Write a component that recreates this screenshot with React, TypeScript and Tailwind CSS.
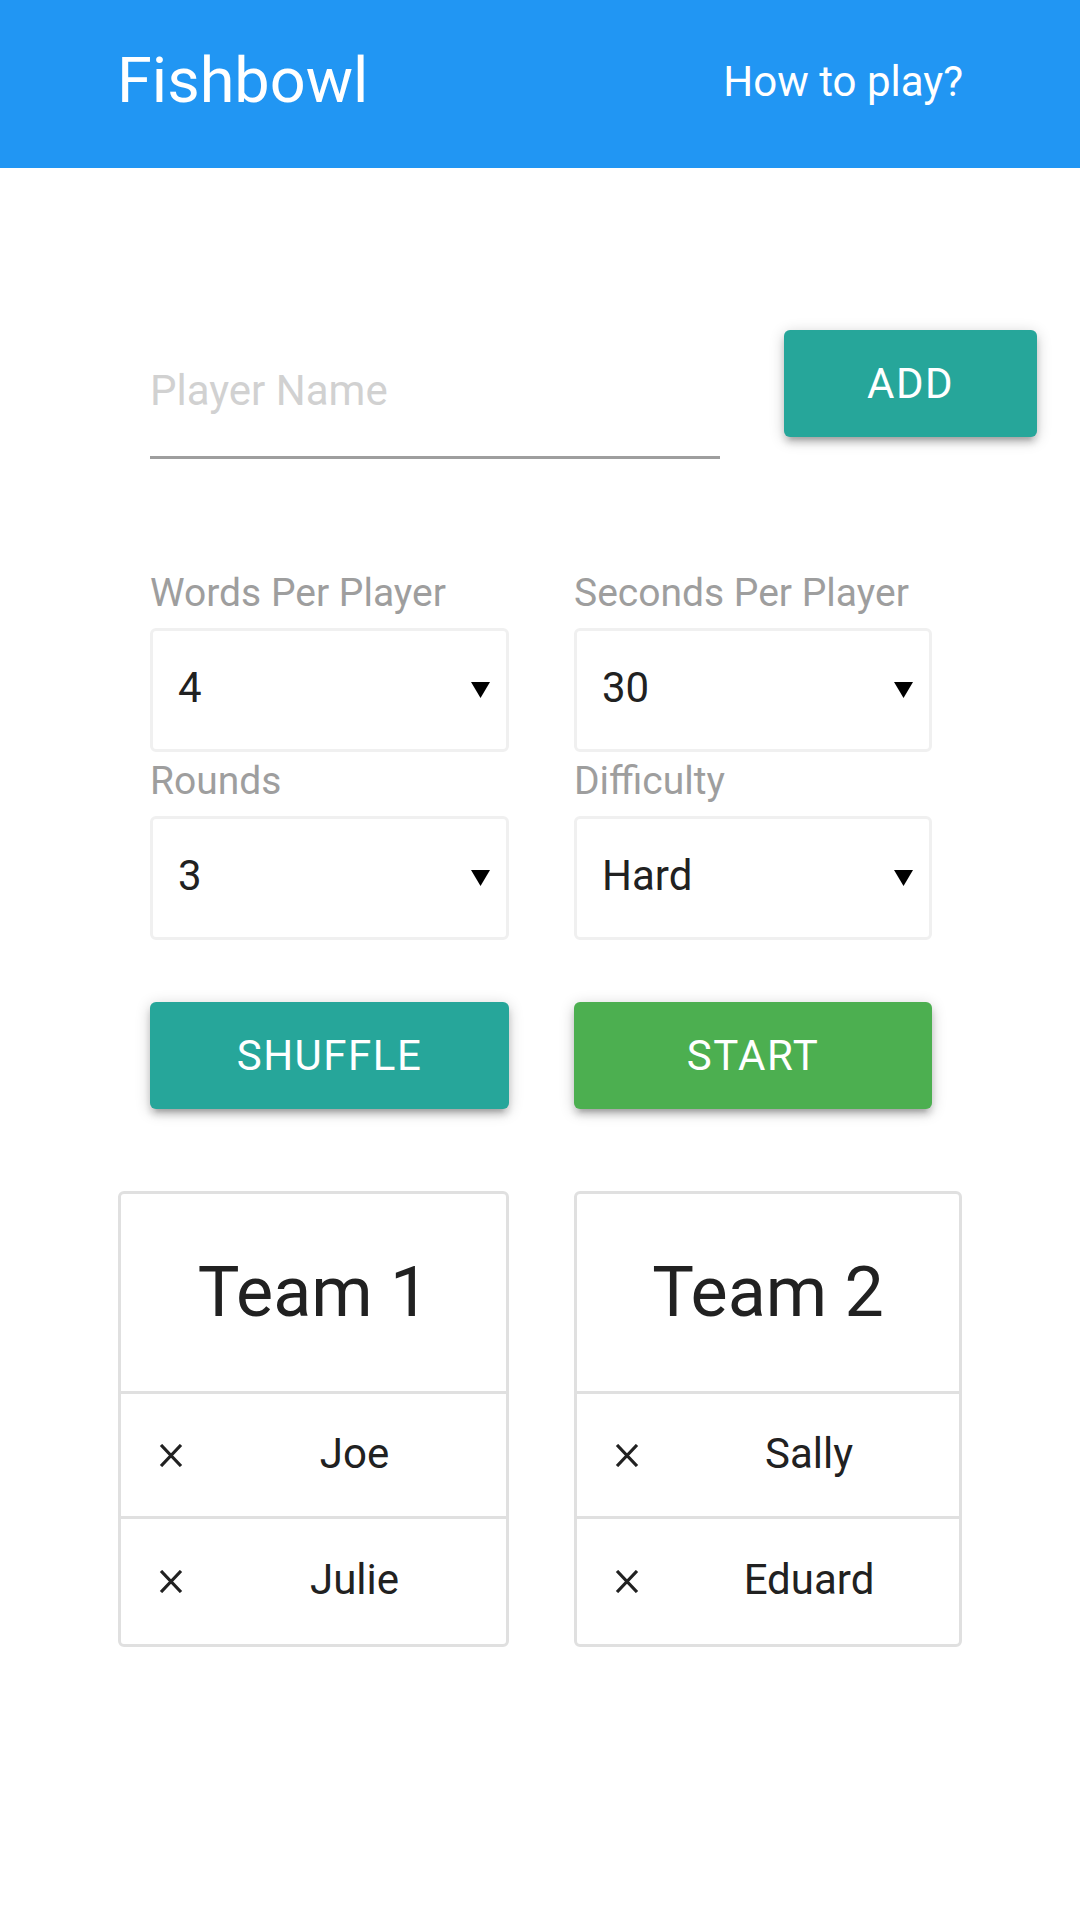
import React from "react";

const teams = [
  { name: "Team 1", players: ["Joe", "Julie"], width: "w-[391px]" },
  { name: "Team 2", players: ["Sally", "Eduard"], width: "w-[388px]" },
];

const selects = [
  { label: "Words Per Player", value: "4" },
  { label: "Seconds Per Player", value: "30" },
  { label: "Rounds", value: "3" },
  { label: "Difficulty", value: "Hard" },
];

const btnShadow =
  "shadow-[0_6px_6px_0_rgba(0,0,0,0.14),0_9px_3px_-6px_rgba(0,0,0,0.12),0_3px_15px_0_rgba(0,0,0,0.2)]";

function Caret() {
  return (
    <svg width="19" height="16" viewBox="0 0 19 16" className="shrink-0">
      <polygon points="0,0 19,0 9.5,16" fill="#000" />
    </svg>
  );
}

function RemoveIcon() {
  return (
    <svg width="24" height="23" viewBox="0 0 24 23">
      <path d="M2 1 L22 22 M22 1 L2 22" stroke="#212121" strokeWidth="3.2" />
    </svg>
  );
}

export default function App() {
  return (
    <div className="w-[1080px] min-h-[1920px] bg-white font-['Roboto',sans-serif] text-[#212121]">
      <header className="h-[168px] bg-[#2196F3] flex items-center justify-between pl-[117px] pr-[117px] pb-[5px] text-white">
        <span className="text-[63px]">Fishbowl</span>
        <span className="text-[42px]">How to play?</span>
      </header>

      <div className="pt-[162px] pl-[150px] flex items-start">
        <div className="mt-[36px] w-[570px] border-b-[3px] border-[#9e9e9e] pb-[41px]">
          <input
            placeholder="Player Name"
            className="w-full h-[49px] text-[42px] outline-none placeholder:text-[#d1d1d1] bg-transparent"
          />
        </div>
        <button
          className={`ml-[64px] w-[253px] h-[107px] rounded-[6px] bg-[#26A69A] text-white text-[42px] tracking-[1.5px] ${btnShadow}`}
        >
          ADD
        </button>
      </div>

      <div className="mt-[113px] pl-[150px] grid grid-cols-[359px_358px] gap-x-[65px] gap-y-[8px]">
        {selects.map((s) => (
          <div key={s.label} className="flex flex-col">
            <span className="text-[39px] leading-[42px] text-[#9e9e9e] mb-[14px]">
              {s.label}
            </span>
            <div className="h-[124px] border-[3px] border-[#f0f0f0] rounded-[6px] flex items-center justify-between pl-[25px] pr-[16px]">
              <span className="text-[42px] -mt-[5px]">{s.value}</span>
              <Caret />
            </div>
          </div>
        ))}
      </div>

      <div className="mt-[62px] pl-[150px] flex gap-[65px]">
        <button
          className={`w-[359px] h-[107px] rounded-[6px] bg-[#26A69A] text-white text-[42px] tracking-[1.5px] ${btnShadow}`}
        >
          SHUFFLE
        </button>
        <button
          className={`w-[358px] h-[107px] rounded-[6px] bg-[#4CAF50] text-white text-[42px] tracking-[1.5px] ${btnShadow}`}
        >
          START
        </button>
      </div>

      <div className="mt-[82px] pl-[118px] flex gap-[65px] items-start">
        {teams.map((t) => (
          <div
            key={t.name}
            className={`${t.width} border-[3px] border-[#e0e0e0] rounded-[6px]`}
          >
            <div className="h-[200px] flex items-center justify-center border-b-[3px] border-[#e0e0e0]">
              <span className="text-[70px]">{t.name}</span>
            </div>
            {t.players.map((p, i) => (
              <div
                key={p}
                className={`h-[125px] flex items-center ${
                  i < t.players.length - 1 ? "border-b-[3px] border-[#e0e0e0]" : ""
                }`}
              >
                <div className="w-[82px] pl-[38px] flex items-center">
                  <RemoveIcon />
                </div>
                <span className="flex-1 text-center text-[42px] -mt-[4px]">{p}</span>
              </div>
            ))}
          </div>
        ))}
      </div>
    </div>
  );
}
